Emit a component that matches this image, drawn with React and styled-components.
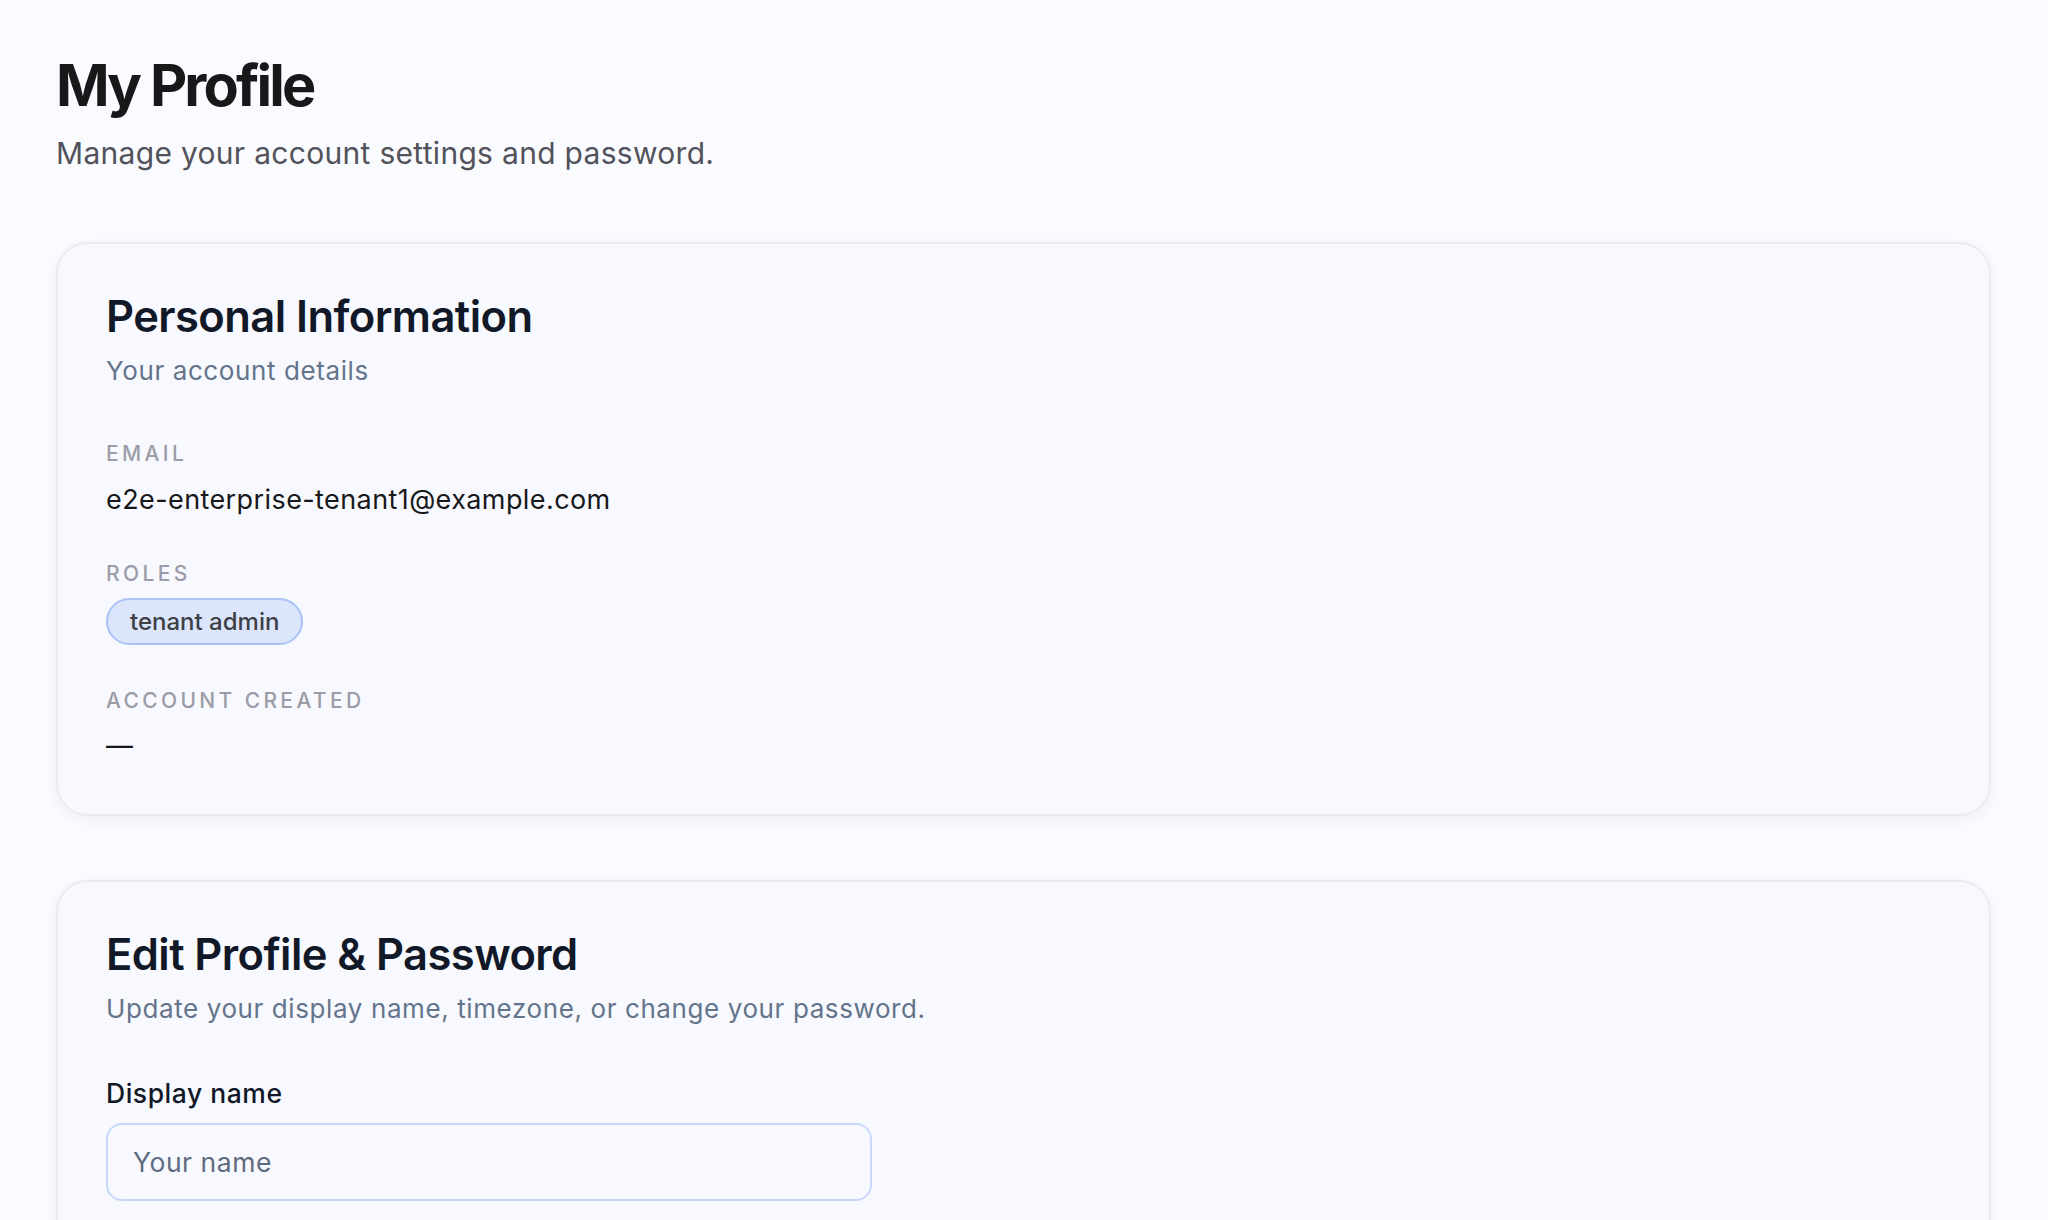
import React, { useState } from "react";
import styled, { createGlobalStyle } from "styled-components";

const GlobalStyle = createGlobalStyle`
  html, body {
    margin: 0;
    padding: 0;
    background: #fafbfe;
  }
  body {
    font-family: Inter, "Noto Sans", "Liberation Sans", sans-serif;
    -webkit-font-smoothing: antialiased;
  }
  * {
    box-sizing: border-box;
  }
`;

const Page = styled.main`
  min-height: 1220px;
  padding: 53px 57px 0 56px;
  background: #fafbfe;
`;

const PageTitle = styled.h1`
  margin: 0;
  font-size: 57.6px;
  line-height: 64px;
  font-weight: 700;
  letter-spacing: -0.05em;
  color: #18181b;
`;

const PageSubtitle = styled.p`
  margin: 14px 0 0;
  font-size: 30px;
  line-height: 44.8px;
  letter-spacing: 0.01em;
  color: #52525b;
`;

const Card = styled.section`
  margin-top: 66px;
  padding: 46px 48px 50px;
  background: #f7f9fe;
  border: 2px solid #eaecf1;
  border-radius: 32px;
  box-shadow: 0 4px 14px rgba(30, 41, 80, 0.05);

  & + & {
    margin-top: 64px;
  }
`;

const CardTitle = styled.h2`
  margin: 0;
  font-size: 43.5px;
  line-height: 52px;
  font-weight: 600;
  letter-spacing: -0.013em;
  color: #111827;
`;

const CardSubtitle = styled.p`
  margin: 10px 0 0;
  font-size: 26px;
  line-height: 38px;
  letter-spacing: 0.023em;
  color: #64748b;
`;

const Details = styled.dl`
  margin: 50px 0 0;
  display: flex;
  flex-direction: column;
`;

const Field = styled.div`
  & + & {
    margin-top: ${(props) => props.$gap || 57}px;
  }
`;

const FieldLabel = styled.dt`
  font-size: 21px;
  line-height: 28px;
  font-weight: 500;
  letter-spacing: 0.16em;
  text-transform: uppercase;
  color: #9b9ca8;
`;

const FieldValue = styled.dd`
  margin: ${(props) => props.$top || 14}px 0 0;
  font-size: 27px;
  line-height: 36px;
  letter-spacing: 0.015em;
  color: #18181b;
`;

const BadgeRow = styled.dd`
  margin: 10px 0 0;
  display: flex;
  gap: 10px;
`;

const Badge = styled.span`
  display: inline-flex;
  align-items: center;
  height: 47px;
  padding: 0 22px;
  border: 2px solid #a9c3f6;
  border-radius: 999px;
  background: #dbe6fd;
  font-size: 24px;
  font-weight: 500;
  color: #3f3f46;
`;

const Form = styled.form`
  margin-top: 47px;
  display: flex;
  flex-direction: column;
`;

const InputLabel = styled.label`
  font-size: 26.5px;
  line-height: 36px;
  font-weight: 500;
  letter-spacing: 0.02em;
  color: #111827;
`;

const TextInput = styled.input`
  margin-top: 12px;
  width: 766px;
  height: 78px;
  padding: 0 25px;
  border: 2px solid #c8d8fb;
  border-radius: 16px;
  background: #f7f9fe;
  font-family: inherit;
  font-size: 26.5px;
  letter-spacing: 0.02em;
  color: #111827;
  outline: none;

  &::placeholder {
    color: #5f6b80;
  }
`;

const roles = ["tenant admin"];

export default function App() {
  const [displayName, setDisplayName] = useState("");

  return (
    <>
      <GlobalStyle />
      <Page>
        <PageTitle>My Profile</PageTitle>
        <PageSubtitle>Manage your account settings and password.</PageSubtitle>

        <Card>
          <CardTitle>Personal Information</CardTitle>
          <CardSubtitle>Your account details</CardSubtitle>
          <Details>
            <Field>
              <FieldLabel>Email</FieldLabel>
              <FieldValue>e2e-enterprise-tenant1@example.com</FieldValue>
            </Field>
            <Field>
              <FieldLabel>Roles</FieldLabel>
              <BadgeRow>
                {roles.map((role) => (
                  <Badge key={role}>{role}</Badge>
                ))}
              </BadgeRow>
            </Field>
            <Field $gap={42}>
              <FieldLabel>Account created</FieldLabel>
              <FieldValue $top={13}>—</FieldValue>
            </Field>
          </Details>
        </Card>

        <Card>
          <CardTitle>Edit Profile &amp; Password</CardTitle>
          <CardSubtitle>
            Update your display name, timezone, or change your password.
          </CardSubtitle>
          <Form onSubmit={(e) => e.preventDefault()}>
            <InputLabel htmlFor="display-name">Display name</InputLabel>
            <TextInput
              id="display-name"
              placeholder="Your name"
              value={displayName}
              onChange={(e) => setDisplayName(e.target.value)}
            />
          </Form>
        </Card>
      </Page>
    </>
  );
}
